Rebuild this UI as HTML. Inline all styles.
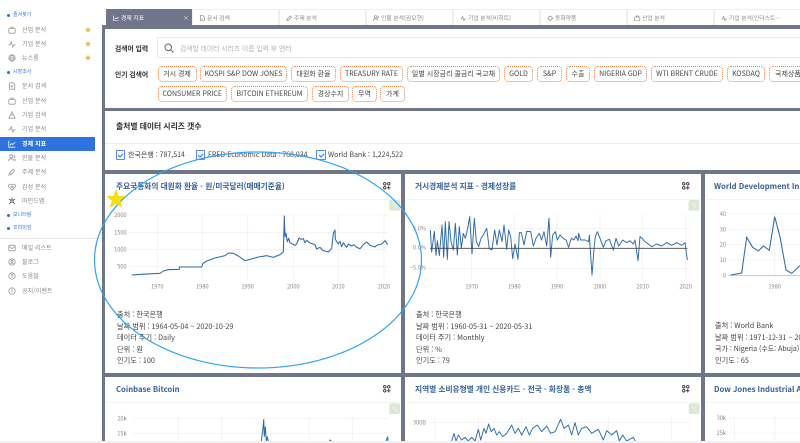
<!DOCTYPE html>
<html lang="ko"><head><meta charset="utf-8"><title>경제 지표</title>
<style>
html,body{margin:0;padding:0;width:800px;height:443px;overflow:hidden;background:#fff}
body{position:relative;font-family:"Noto Sans CJK KR","Liberation Sans",sans-serif;color:#444}
.a,.a *{box-sizing:border-box}
.t{position:absolute;white-space:nowrap;line-height:10px;height:10px}
.s{left:22px;font-size:6px;color:#888;letter-spacing:.1px}
.h{left:13px;font-size:5px;color:#3a78e0}
.d{position:absolute;left:7px;width:3px;height:3px;border-radius:50%;background:#2b6fe0}
.i{position:absolute;left:7.5px;width:8px;height:8px;fill:none;stroke:#999;stroke-width:1}
.st{position:absolute;left:84.5px;color:#f3b52a;font-size:7px;line-height:8px}
.tab{position:absolute;top:9px;height:16px;width:87px;background:#fff;border:1px solid #eee;border-bottom:0;font-size:5.8px;line-height:15px;color:#888}
.tab span{position:absolute;left:14px;top:0;white-space:nowrap}
.tab svg{position:absolute;left:6px;top:4.5px;width:6.5px;height:6.5px;fill:none;stroke:#888;stroke-width:1}
.card{position:absolute;background:#fff}
.tag{position:absolute;height:16px;border:1px dotted #ee8344;border-radius:4px;font-size:7px;line-height:14px;text-align:center;color:#444;white-space:nowrap;overflow:hidden;background:#fff}
.ct{position:absolute;font-size:7.7px;font-weight:700;color:#34619c;white-space:nowrap;line-height:12px}
.m{position:absolute;font-size:7.2px;line-height:10px;color:#444;white-space:nowrap}
.b{font-weight:700;color:#2d2d2d;font-size:6.8px}
.cb{position:absolute;top:150px;width:9.5px;height:9.5px;border:1px solid #5a8be0;border-radius:1px;background:#f5f8ff}
svg.o{position:absolute;overflow:hidden}
svg text{font-family:"Noto Sans CJK KR","Liberation Sans",sans-serif;fill:#888}
</style></head><body>
<div class="a" style="position:absolute;inset:0;filter:blur(.35px)">

<!-- frame -->
<div style="position:absolute;left:102px;top:25px;width:698px;height:418px;background:#70768a"></div>

<!-- sidebar -->
<div class="d" style="top:14px"></div><div class="t h" style="top:10px">즐겨찾기</div>
<svg class="i" style="top:25.5px" viewBox="0 0 10 10"><rect x="1" y="3" width="8" height="6" rx="1"/><path d="M3.500 3V1.500h3V3"/></svg><div class="t s" style="top:24.500px">산업 분석</div><div class="st" style="top:25.500px">★</div>
<svg class="i" style="top:39.500px" viewBox="0 0 10 10"><path d="M.5 6h2l1.500-4 2 7 1.500-3h2"/></svg><div class="t s" style="top:38.500px">기업 분석</div><div class="st" style="top:39.500px">★</div>
<svg class="i" style="top:54px" viewBox="0 0 10 10"><circle cx="5" cy="5" r="4"/><path d="M1 5h8M5 1c-2.500 2.500-2.500 5.500 0 8M5 1c2.500 2.500 2.500 5.500 0 8"/></svg><div class="t s" style="top:53px">뉴스룸</div><div class="st" style="top:54px">★</div>
<div class="d" style="top:71px"></div><div class="t h" style="top:67px">시장조사</div>
<svg class="i" style="top:82px" viewBox="0 0 10 10"><path d="M2 1h4l2.500 2.500V9H2zM3.500 6h3M3.500 4.500h2"/></svg><div class="t s" style="top:81px">문서 검색</div>
<svg class="i" style="top:96.500px" viewBox="0 0 10 10"><rect x="1" y="3" width="8" height="6" rx="1"/><path d="M3.500 3V1.500h3V3"/></svg><div class="t s" style="top:95.500px">산업 분석</div>
<svg class="i" style="top:111px" viewBox="0 0 10 10"><path d="M5 1l2 4H3zM1 9l2-4h4l2 4z"/></svg><div class="t s" style="top:110px">기업 검색</div>
<svg class="i" style="top:125px" viewBox="0 0 10 10"><path d="M.5 6h2l1.500-4 2 7 1.500-3h2"/></svg><div class="t s" style="top:124px">기업 분석</div>
<div style="position:absolute;left:0;top:137px;width:95px;height:14px;background:#2e73de;border-radius:0 1px 1px 0"></div>
<svg class="i" style="top:140px;stroke:#fff" viewBox="0 0 10 10"><path d="M1 1v8h8M2.500 6.500l2-2 1.500 1L9 3"/></svg><div class="t s" style="top:138.500px;color:#fff;font-weight:700">경제 지표</div>
<svg class="i" style="top:154px" viewBox="0 0 10 10"><circle cx="4" cy="3" r="2"/><path d="M.5 9c0-4 7-4 7 0M7 1.500c2 .5 2 3 0 3.500M8 6c1 .5 1.500 1.500 1.500 2.500"/></svg><div class="t s" style="top:153px">인물 분석</div>
<svg class="i" style="top:168px" viewBox="0 0 10 10"><path d="M1 9l1-3 4.500-4.500 2 2L4 8zM3 6l1.500 1.500"/></svg><div class="t s" style="top:167px">주제 분석</div>
<svg class="i" style="top:182.500px" viewBox="0 0 10 10"><path d="M5 9L1 5C-.5 2.500 3 0 5 2.500 7 0 10.500 2.500 9 5zM2.500 5h1.500l1-1 1 2 .5-1h1"/></svg><div class="t s" style="top:181.500px">감성 분석</div>
<svg class="i" style="top:197px;stroke:#555" viewBox="0 0 10 10"><circle cx="5" cy="5" r="1.500"/><path d="M5 3.500V1M3.800 4L1 2.500M6.200 4L9 2.500M3.800 6L1.500 9M6.200 6l2.300 3"/></svg><div class="t s" style="top:196px">마인드맵</div>
<div class="d" style="top:214px"></div><div class="t h" style="top:210px">모니터링</div>
<div class="d" style="top:227px"></div><div class="t h" style="top:223px">프리미엄</div>
<div style="position:absolute;left:0;top:238px;width:102px;height:1px;background:#e8e8e8"></div>
<svg class="i" style="top:244px" viewBox="0 0 10 10"><rect x="1" y="1.500" width="8" height="7" rx="1"/><path d="M1 3l4 3 4-3"/></svg><div class="t s" style="top:243px">메일 리스트</div>
<svg class="i" style="top:258px" viewBox="0 0 10 10"><circle cx="5" cy="5" r="4"/><circle cx="5" cy="4" r="1.300"/><path d="M3 7.500c1-1.500 3-1.500 4 0"/></svg><div class="t s" style="top:257px">블로그</div>
<svg class="i" style="top:272px" viewBox="0 0 10 10"><circle cx="5" cy="5" r="4"/><path d="M3.800 4c0-1.500 2.500-1.500 2.500 0 0 1-1.300 1-1.300 2M5 7v.6"/></svg><div class="t s" style="top:271px">도움말</div>
<svg class="i" style="top:287px" viewBox="0 0 10 10"><circle cx="5" cy="5" r="4"/><path d="M5 2.500v3.500M5 7v.6"/></svg><div class="t s" style="top:286px">공지/이벤트</div>

<!-- tabs -->
<div class="tab" style="left:106px;background:#70768a;border-color:#70768a;color:#fff;width:86px"><svg style="stroke:#fff" viewBox="0 0 10 10"><path d="M1 1v8h8M2.500 6.500l2-2 1.500 1L9 3"/></svg><span>경제 지표</span><span style="left:76px;color:#eee">×</span></div>
<div class="tab" style="left:192px"><svg viewBox="0 0 10 10"><path d="M2 1h4l2.500 2.500V9H2zM3.500 6h3"/></svg><span>문서 검색</span></div>
<div class="tab" style="left:279px"><svg viewBox="0 0 10 10"><path d="M1 9l1-3 4.500-4.500 2 2L4 8z"/></svg><span>주제 분석</span></div>
<div class="tab" style="left:366px"><svg viewBox="0 0 10 10"><circle cx="4" cy="3" r="2"/><path d="M.5 9c0-4 7-4 7 0M7 1.500c2 .5 2 3 0 3.500"/></svg><span>인물 분석(권오현)</span></div>
<div class="tab" style="left:453px"><svg viewBox="0 0 10 10"><path d="M.5 6h2l1.500-4 2 7 1.500-3h2"/></svg><span>기업 분석(비히트)</span></div>
<div class="tab" style="left:540px"><svg viewBox="0 0 10 10"><circle cx="5" cy="5" r="3"/><path d="M5 .5v2M5 7.500v2M.5 5h2M7.500 5h2"/></svg><span>동화약품</span></div>
<div class="tab" style="left:627px"><svg viewBox="0 0 10 10"><rect x="1" y="3" width="8" height="6" rx="1"/><path d="M3.500 3V1.500h3V3"/></svg><span>산업 분석</span></div>
<div class="tab" style="left:714px"><svg viewBox="0 0 10 10"><path d="M.5 6h2l1.500-4 2 7 1.500-3h2"/></svg><span>기업 분석(인더스트···</span></div>

<!-- search card -->
<div class="card" style="left:105px;top:29px;width:695px;height:79px"></div>
<div class="m b" style="left:115px;top:43px">검색어 입력</div>
<div style="position:absolute;left:157px;top:37px;width:643px;height:21px;border:1px solid #e9e9e9;border-right:0;border-radius:2px 0 0 2px;background:#fff"></div>
<svg style="position:absolute;left:164px;top:43px;width:10px;height:10px;fill:none;stroke:#666;stroke-width:1" viewBox="0 0 10 10"><circle cx="4.300" cy="4.300" r="3.300"/><path d="M6.800 6.800l2.700 2.700"/></svg>
<div class="m" style="left:180px;top:43px;color:#b3b3b3;font-size:6.8px">검색할 데이터 시리즈 이름 입력 후 엔터</div>
<div class="m b" style="left:115px;top:69px">인기 검색어</div>
<div class="tag" style="left:157.500px;top:66px;width:39px">거시 경제</div>
<div class="tag" style="left:200px;top:66px;width:87px">KOSPI S&amp;P DOW JONES</div>
<div class="tag" style="left:291px;top:66px;width:45px">대원화 환율</div>
<div class="tag" style="left:340px;top:66px;width:63px">TREASURY RATE</div>
<div class="tag" style="left:407px;top:66px;width:93px">일별 시장금리 콜금리 국고채</div>
<div class="tag" style="left:504px;top:66px;width:29px">GOLD</div>
<div class="tag" style="left:537px;top:66px;width:25px">S&amp;P</div>
<div class="tag" style="left:566px;top:66px;width:24px">수출</div>
<div class="tag" style="left:594px;top:66px;width:53px">NIGERIA GDP</div>
<div class="tag" style="left:651px;top:66px;width:72px">WTI BRENT CRUDE</div>
<div class="tag" style="left:727px;top:66px;width:38px">KOSDAQ</div>
<div class="tag" style="left:769px;top:66px;width:50px;text-align:left;padding-left:5px">국제상품</div>
<div class="tag" style="left:157.500px;top:86px;width:69.500px">CONSUMER PRICE</div>
<div class="tag" style="left:231px;top:86px;width:77px">BITCOIN ETHEREUM</div>
<div class="tag" style="left:312px;top:86px;width:37px">경상수지</div>
<div class="tag" style="left:352px;top:86px;width:25px">무역</div>
<div class="tag" style="left:380px;top:86px;width:25px">가계</div>

<!-- source card -->
<div class="card" style="left:105px;top:111px;width:695px;height:59px"></div>
<div class="m b" style="left:116px;top:122px;font-size:7.8px">출처별 데이터 시리즈 갯수</div>
<div style="position:absolute;left:105px;top:143px;width:695px;height:1px;background:#eee"></div>
<div class="cb" style="left:115.500px"></div><div class="cb" style="left:195.500px"></div><div class="cb" style="left:316px"></div>
<svg class="o" style="left:100px;top:145px;width:240px;height:20px;fill:none;stroke:#3a78e0;stroke-width:1" viewBox="0 0 240 20"><path d="M18 10l2 2 3-3M98 10l2 2 3-3M219 10l2 2 3-3"/></svg>
<div class="m" style="left:128px;top:150px;font-size:7px">한국은행 : 787,514</div>
<div class="m" style="left:208px;top:150px;font-size:7px">FRED Economic Data : 768,034</div>
<div class="m" style="left:328px;top:150px;font-size:7px">World Bank : 1,224,522</div>

<!-- chart cards -->
<div class="card" style="left:105px;top:174px;width:296px;height:199px"></div>
<div class="card" style="left:405px;top:174px;width:296px;height:199px"></div>
<div class="card" style="left:705px;top:174px;width:95px;height:199px"></div>
<div class="card" style="left:105px;top:377px;width:296px;height:64px"></div>
<div class="card" style="left:405px;top:377px;width:296px;height:64px"></div>
<div class="card" style="left:705px;top:377px;width:95px;height:64px"></div>

<div class="ct" style="left:116px;top:181px">주요국통화의 대원화 환율 - 원/미국달러(매매기준율)</div>
<div class="ct" style="left:415px;top:181px">거시경제분석 지표 - 경제성장률</div>
<div class="ct" style="left:714px;top:181px">World Development In</div>
<div class="ct" style="left:116px;top:384px">Coinbase Bitcoin</div>
<div class="ct" style="left:415px;top:384px">지역별 소비유형별 개인 신용카드 - 전국 - 화장품 - 총액</div>
<div class="ct" style="left:714px;top:384px">Dow Jones Industrial A</div>

<!-- header dividers -->
<div style="position:absolute;left:106px;top:199px;width:294px;height:1px;background:#f3f3f3"></div>
<div style="position:absolute;left:406px;top:199px;width:294px;height:1px;background:#f3f3f3"></div>
<div style="position:absolute;left:706px;top:199px;width:94px;height:1px;background:#f3f3f3"></div>
<div style="position:absolute;left:106px;top:402px;width:294px;height:1px;background:#f3f3f3"></div>
<div style="position:absolute;left:406px;top:402px;width:294px;height:1px;background:#f3f3f3"></div>
<div style="position:absolute;left:706px;top:402px;width:94px;height:1px;background:#f3f3f3"></div>

<!-- chart 1 -->
<svg class="o" style="left:100px;top:170px" width="305" height="135" viewBox="0 0 915 405">
<g stroke="#f1f1f1" stroke-width="2.500" fill="none"><path d="M85 135H865M85 187H865M85 238H865M85 290H865M172 130V330M307 130V330M443 130V330M580 130V330M715 130V330M852 130V330"/></g>
<g font-size="17" text-anchor="end"><text x="80" y="141">2000</text><text x="80" y="193">1500</text><text x="80" y="244">1000</text><text x="80" y="296">500</text></g>
<g font-size="17" text-anchor="middle"><text x="172" y="355">1970</text><text x="307" y="355">1980</text><text x="443" y="355">1990</text><text x="580" y="355">2000</text><text x="715" y="355">2010</text><text x="852" y="355">2020</text></g>
<path d="M95 315L125 313 180 310 190 303 205 299 238 298 238 291 305 291 308 281 320 273 345 264 375 257 385 249 400 250 415 258 435 272 450 268 475 261 500 257 520 262 540 254 550 245 553 138 555 200 558 190 562 215 566 205 570 218 585 226 590 222 597 204 603 208 610 206 615 218 620 211 630 219 645 224 650 237 660 232 668 241 685 246 695 235 700 190 705 180 706 208 715 222 720 214 725 230 730 218 740 232 745 222 755 228 762 224 770 232 780 236 790 224 800 216 810 226 825 231 830 226 845 222 855 212 863 224" fill="none" stroke="#2e6da8" stroke-width="3.200" stroke-linejoin="round"/>
<rect x="868" y="90" width="32" height="32" rx="5" fill="#dde7d3"/><path d="M877 100l14 14M891 100l-6 3" stroke="#f2f5ee" stroke-width="3" fill="none"/>
</svg>

<!-- chart 2 -->
<svg class="o" style="left:400px;top:170px" width="305" height="135" viewBox="0 0 915 405">
<g stroke="#f1f1f1" stroke-width="2.500" fill="none"><path d="M85 175H865M85 295H865M215 130V330M343 130V330M471 130V330M600 130V330M728 130V330M857 130V330"/></g>
<g font-size="17" text-anchor="end"><text x="78" y="181">5.0%</text><text x="78" y="239">0.0%</text><text x="78" y="299">−5.0%</text></g>
<g font-size="17" text-anchor="middle"><text x="215" y="355">1970</text><text x="343" y="355">1980</text><text x="471" y="355">1990</text><text x="600" y="355">2000</text><text x="728" y="355">2010</text><text x="857" y="355">2020</text></g>
<path d="M91 180L95 246 103 184 108 256 112 212 118 257 126 165 131 262 136 155 142 268 147 155 153 215 160 240 166 160 172 255 178 170 184 235 190 190 196 205 203 175 209 140 216 252 223 145 229 215 236 230 243 205 250 195 260 175 268 236 276 240 284 180 291 225 298 180 306 215 312 165 320 238 326 180 332 200 338 266 345 222 354 268 358 188 364 188 372 225 380 184 392 185 400 228 408 205 418 190 425 210 432 185 440 228 447 145 452 262 458 195 466 185 472 210 480 195 490 205 498 210 506 232 514 205 522 210 528 198 534 212 536 190 542 210 556 210 566 215 568 195 576 315 583 225 586 200 592 185 600 205 610 232 618 212 628 208 640 240 648 205 656 228 668 210 680 218 690 212 700 222 705 210 714 272 720 200 726 205 735 215 745 222 755 230 770 222 785 228 800 218 815 226 830 218 845 226 855 218 862 270" fill="none" stroke="#2e6da8" stroke-width="2.900" stroke-linejoin="round"/>
<path d="M90 235H862" stroke="#444" stroke-width="2.500"/>
<rect x="866" y="90" width="32" height="32" rx="5" fill="#dde7d3"/><path d="M875 100l14 14M889 100l-6 3" stroke="#f2f5ee" stroke-width="3" fill="none"/>
</svg>

<!-- chart 3 -->
<svg class="o" style="left:700px;top:170px" width="100" height="135" viewBox="0 0 300 405">
<g stroke="#f1f1f1" stroke-width="2.500" fill="none"><path d="M85 132H300M85 178H300M85 224H300M85 270H300M224 125V325"/></g>
<path d="M85 316H300" stroke="#aaa" stroke-width="2"/>
<g font-size="17" text-anchor="end"><text x="78" y="138">40</text><text x="78" y="184">30</text><text x="78" y="230">20</text><text x="78" y="276">10</text><text x="78" y="322">0</text></g>
<text font-size="17" text-anchor="middle" x="224" y="355">1980</text>
<path d="M92 315L125 309 140 202 158 232 175 243 190 228 208 241 224 140 240 200 258 300 275 310 300 287" fill="none" stroke="#2e6da8" stroke-width="3.200"/>
</svg>

<!-- meta text -->
<div class="m" style="left:117px;top:310px">출처 : 한국은행</div>
<div class="m" style="left:117px;top:321.500px">날짜 범위 : 1964-05-04 ~ 2020-10-29</div>
<div class="m" style="left:117px;top:333px">데이터 주기 : Daily</div>
<div class="m" style="left:117px;top:344.500px">단위 : 원</div>
<div class="m" style="left:117px;top:356px">인기도 : 100</div>

<div class="m" style="left:416px;top:310px">출처 : 한국은행</div>
<div class="m" style="left:416px;top:321.500px">날짜 범위 : 1960-05-31 ~ 2020-05-31</div>
<div class="m" style="left:416px;top:333px">데이터 주기 : Monthly</div>
<div class="m" style="left:416px;top:344.500px">단위 : %</div>
<div class="m" style="left:416px;top:356px">인기도 : 79</div>

<div class="m" style="left:715px;top:321px">출처 : World Bank</div>
<div class="m" style="left:715px;top:332.500px">날짜 범위 : 1971-12-31 ~ 2019-12-31</div>
<div class="m" style="left:715px;top:344px;font-size:7px">국가 : Nigeria (수도: Abuja)</div>
<div class="m" style="left:715px;top:356px">인기도 : 65</div>

<!-- bottom charts: clipped at y=441 -->
<svg class="o" style="left:100px;top:300px" width="305" height="141" viewBox="0 0 915 423">
<g stroke="#f1f1f1" stroke-width="2.500" fill="none"><path d="M100 355H865M100 400H865M235 350V423M365 350V423M495 350V423M627 350V423M757 350V423"/></g>
<g font-size="17" text-anchor="end"><text x="80" y="361">20k</text><text x="80" y="406">15k</text></g>
<path d="M484 423L489 385 491 358 493 410 496 380 499 423 502 412 505 423M688 423L690 420 694 423M858 423L863 410 864 423" fill="none" stroke="#2e6da8" stroke-width="3"/>
<rect x="868" y="310" width="32" height="32" rx="5" fill="#dde7d3"/><path d="M877 320l14 14M891 320l-6 3" stroke="#f2f5ee" stroke-width="3" fill="none"/>
</svg>
<svg class="o" style="left:400px;top:300px" width="305" height="141" viewBox="0 0 915 423">
<g stroke="#f1f1f1" stroke-width="2.500" fill="none"><path d="M85 367H865M105 350V423M235 350V423M365 350V423M495 350V423M625 350V423M815 350V423"/></g>
<text font-size="17" text-anchor="end" x="78" y="373">300B</text>
<path d="M155 423L162 400 168 423 175 405 185 420 195 412 205 423 215 412 225 423 235 388 242 420 252 385 258 400 266 372 274 395 282 385 290 405 298 395 308 410 320 400 335 375 345 400 355 385 365 405 378 380 388 405 398 385 412 375 425 395 440 378 452 400 465 395 482 358 492 385 505 375 515 405 525 368 535 405 545 385 560 380 575 400 595 388 610 420 620 392 635 405 650 392 658 423 668 405 680 423 700 412 706 423" fill="none" stroke="#2e6da8" stroke-width="2.900" stroke-linejoin="round"/>
<rect x="866" y="310" width="32" height="32" rx="5" fill="#dde7d3"/><path d="M875 320l14 14M889 320l-6 3" stroke="#f2f5ee" stroke-width="3" fill="none"/>
</svg>
<svg class="o" style="left:700px;top:300px" width="100" height="141" viewBox="0 0 300 423">
<g stroke="#f1f1f1" stroke-width="2.500" fill="none"><path d="M85 354H300M85 399H300M103 350V423M225 350V423"/></g>
<g font-size="17" text-anchor="end"><text x="78" y="360">30k</text><text x="78" y="405">25k</text></g>
</svg>

<!-- card action icons -->
<svg class="o" style="left:383px;top:181.500px" width="8" height="8" viewBox="0 0 9 9" fill="none" stroke="#333" stroke-width="1"><circle cx="2" cy="2" r="1.400"/><circle cx="6.500" cy="2" r="1.400"/><circle cx="2" cy="6.500" r="1.400"/><path d="M6.500 4.500v4M4.500 6.500h4"/></svg>
<svg class="o" style="left:682px;top:181.500px" width="8" height="8" viewBox="0 0 9 9" fill="none" stroke="#333" stroke-width="1"><circle cx="2" cy="2" r="1.400"/><circle cx="6.500" cy="2" r="1.400"/><circle cx="2" cy="6.500" r="1.400"/><path d="M6.500 4.500v4M4.500 6.500h4"/></svg>
<svg class="o" style="left:383px;top:385px" width="8" height="8" viewBox="0 0 9 9" fill="none" stroke="#333" stroke-width="1"><circle cx="2" cy="2" r="1.400"/><circle cx="6.500" cy="2" r="1.400"/><circle cx="2" cy="6.500" r="1.400"/><path d="M6.500 4.500v4M4.500 6.500h4"/></svg>
<svg class="o" style="left:682px;top:385px" width="8" height="8" viewBox="0 0 9 9" fill="none" stroke="#333" stroke-width="1"><circle cx="2" cy="2" r="1.400"/><circle cx="6.500" cy="2" r="1.400"/><circle cx="2" cy="6.500" r="1.400"/><path d="M6.500 4.500v4M4.500 6.500h4"/></svg>

<!-- bottom strip -->
<div style="position:absolute;left:0;top:441px;width:800px;height:2px;background:#f2f2f2"></div>

<!-- annotation overlay -->
<svg class="o" style="left:0;top:0" width="800" height="443" viewBox="0 0 800 443">
<ellipse cx="258" cy="260" rx="163.500" ry="108" fill="none" stroke="#2ea5f0" stroke-width="1.200"/>
<polygon points="116,189 118.700,196 126,196 120.200,200.500 122.300,208 116,203.500 109.700,208 111.800,200.500 106,196 113.300,196" fill="#f7dd10"/>
</svg>
</div>
</body></html>
